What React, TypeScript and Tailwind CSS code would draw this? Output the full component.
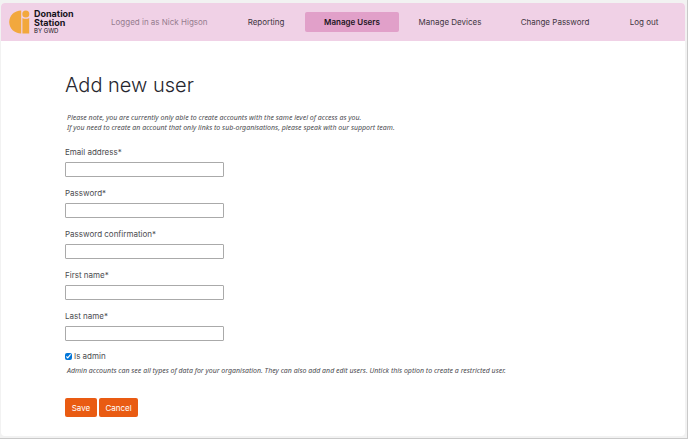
import React from "react";

const navItems = [
  { label: "Reporting", width: "w-[78px]" },
  { label: "Manage Users", width: "w-[94px]", active: true },
  { label: "Manage Devices", width: "w-[102px]" },
  { label: "Change Password", width: "w-[108px]" },
  { label: "Log out", width: "w-[70px]" },
];

const fields = [
  { id: "email", label: "Email address*", type: "email" },
  { id: "password", label: "Password*", type: "password" },
  { id: "confirmation", label: "Password confirmation*", type: "password" },
  { id: "first-name", label: "First name*", type: "text" },
  { id: "last-name", label: "Last name*", type: "text" },
];

function Logo() {
  return (
    <a href="#" className="flex items-center gap-1 text-[#17131c]">
      <svg width="21" height="24" viewBox="0 0 21 24" fill="#f2a83d" aria-hidden="true">
        <path d="M12.2 0.5V23.5C5.4 23.5 0.2 18.5 0.2 12S5.4 0.5 12.2 0.5Z" />
        <circle cx="16.8" cy="4" r="3.5" />
        <path d="M13.4 7.9Q16.8 9.8 20.2 7.9V23.5H13.4Z" />
      </svg>
      <span className="flex flex-col text-[9px] leading-[9px] font-bold">
        <span>Donation</span>
        <span>Station</span>
        <span className="text-[6px] leading-[8px] font-normal">BY GWD</span>
      </span>
    </a>
  );
}

function Header() {
  return (
    <header className="flex h-[38px] items-center bg-[#f0d1e6] pr-[6px] pl-2 text-[8px] text-[#41353f]">
      <Logo />
      <span className="ml-auto w-[136px] pl-5 text-[#957c8e]">Logged in as Nick Higson</span>
      <nav className="flex">
        {navItems.map((item) => (
          <a
            key={item.label}
            href="#"
            className={`flex h-5 items-center justify-center rounded-[2px] whitespace-nowrap ${item.width} ${
              item.active ? "bg-[#e1a0c9] font-semibold text-[#21151d]" : ""
            }`}
          >
            {item.label}
          </a>
        ))}
      </nav>
    </header>
  );
}

export default function App() {
  return (
    <div className="border-r border-b border-[#c9c9c9] bg-[#f2f2f2] pt-[3px] pr-[2px] pb-[2px] pl-px font-['Inter',sans-serif] text-[#4b4b4f]">
      <div className="overflow-hidden rounded-[4px] bg-white">
        <Header />
        <main className="px-16 pt-[30px] pb-[19px] text-[8px] leading-3">
          <h1 className="text-[20px] leading-7 font-light text-[#26262e]">Add new user</h1>
          <p className="mt-[14px] ml-[2px] font-['Noto_Sans',sans-serif] text-[7px] leading-[10px] italic">
            Please note, you are currently only able to create accounts with the same level of access as you.
            <br />
            If you need to create an account that only links to sub-organisations, please speak with our support team.
          </p>
          <form className="mt-[13px]" onSubmit={(e) => e.preventDefault()}>
            <div className="mb-[9px] flex flex-col gap-[10px]">
              {fields.map((field) => (
                <div key={field.id}>
                  <label htmlFor={field.id} className="block">
                    {field.label}
                  </label>
                  <input
                    id={field.id}
                    type={field.type}
                    className="mt-1 block h-[15px] w-[159px] rounded-[1px] border border-[#aaaaaa] px-1"
                  />
                </div>
              ))}
            </div>
            <div className="flex items-center gap-[2px]">
              <input id="admin" type="checkbox" defaultChecked className="size-[7px] accent-[#0075d9]" />
              <label htmlFor="admin">Is admin</label>
            </div>
            <p className="mt-1 ml-[2px] font-['Noto_Sans',sans-serif] text-[7px] leading-[10px] italic">
              Admin accounts can see all types of data for your organisation. They can also add and edit users. Untick
              this option to create a restricted user.
            </p>
            <div className="mt-[22px] flex gap-[2px] text-white">
              <button type="submit" className="h-[19px] w-8 rounded-[2px] bg-[#e95b12]">
                Save
              </button>
              <button type="button" className="h-[19px] w-[39px] rounded-[2px] bg-[#e95b12]">
                Cancel
              </button>
            </div>
          </form>
        </main>
      </div>
    </div>
  );
}
